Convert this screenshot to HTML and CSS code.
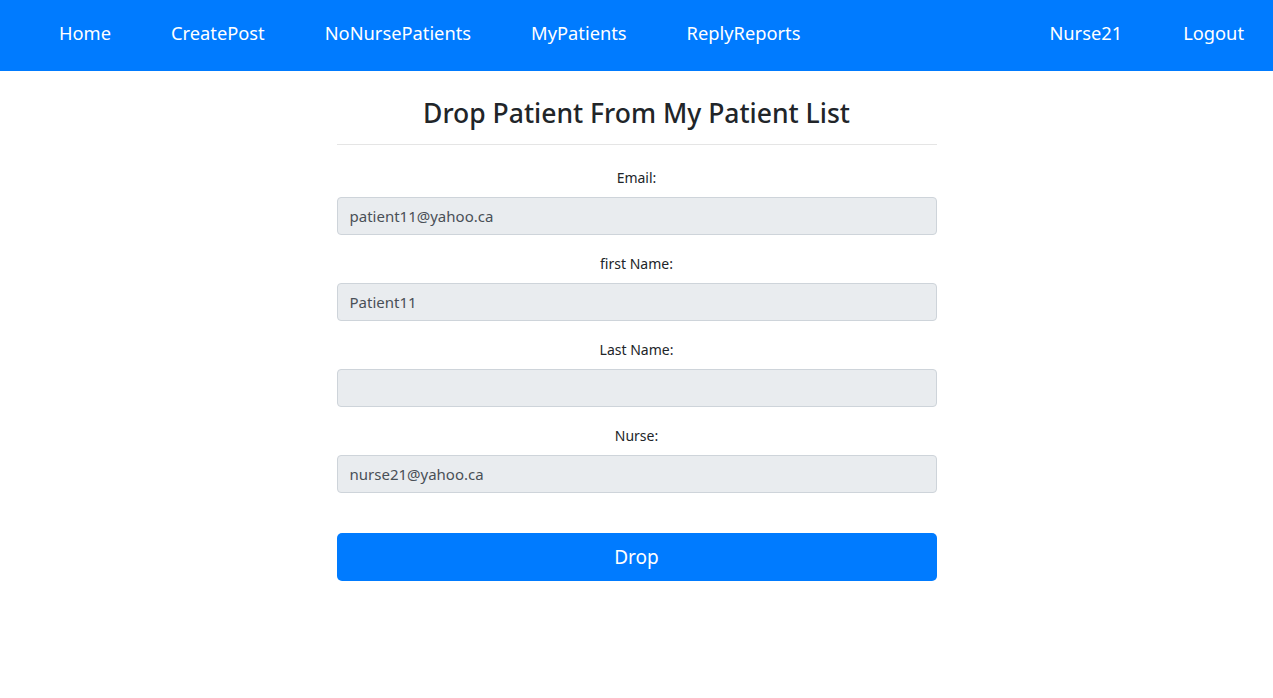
FILE: index.html
```html
<!DOCTYPE html>
<html lang="en">
<head>
<meta charset="utf-8">
<title>Drop Patient</title>
<link rel="stylesheet" href="styles.css">
</head>
<body>
<nav class="navbar">
  <div class="nav-left">
    <a class="nav-link" href="#">Home</a>
    <a class="nav-link" href="#">CreatePost</a>
    <a class="nav-link" href="#">NoNursePatients</a>
    <a class="nav-link" href="#">MyPatients</a>
    <a class="nav-link" href="#">ReplyReports</a>
  </div>
  <div class="nav-right">
    <a class="nav-link" href="#">Nurse21</a>
    <a class="nav-link" href="#">Logout</a>
  </div>
</nav>
<main class="container">
  <h2 class="title">Drop Patient From My Patient List</h2>
  <hr class="divider">
  <form class="form">
    <div class="form-group">
      <label class="label">Email:</label>
      <input class="input" type="text" value="patient11@yahoo.ca" readonly>
    </div>
    <div class="form-group">
      <label class="label">first Name:</label>
      <input class="input" type="text" value="Patient11" readonly>
    </div>
    <div class="form-group">
      <label class="label">Last Name:</label>
      <input class="input" type="text" value="" readonly>
    </div>
    <div class="form-group">
      <label class="label">Nurse:</label>
      <input class="input" type="text" value="nurse21@yahoo.ca" readonly>
    </div>
    <button class="btn" type="button">Drop</button>
  </form>
</main>
</body>
</html>
```
FILE: styles.css
```css
* { box-sizing: border-box; }
body {
  margin: 0;
  font-family: "Noto Sans", "Open Sans", sans-serif;
  color: #212529;
  background: #fff;
}
.navbar {
  height: 71px;
  background: #007bff;
  display: flex;
  align-items: center;
  padding: 0 29px 0 59px;
}
.nav-left, .nav-right {
  display: flex;
  align-items: center;
  gap: 60px;
}
.nav-right {
  margin-left: auto;
  gap: 61px;
}
.nav-link {
  color: #fff;
  text-decoration: none;
  font-size: 18.3px;
  line-height: 28px;
  margin-top: -6px;
}
.container {
  width: 600px;
  margin: 0 auto;
  padding-top: 24px;
}
.title {
  margin: 0;
  text-align: center;
  font-size: 26.5px;
  font-weight: 500;
  line-height: 36px;
  color: #212529;
}
.divider {
  margin: 13px 0 0;
  border: 0;
  border-top: 1px solid #e5e5e5;
}
.form {
  padding-top: 22px;
  display: flex;
  flex-direction: column;
}
.form-group {
  display: flex;
  flex-direction: column;
  margin-bottom: 18px;
}
.label {
  text-align: center;
  font-size: 14px;
  line-height: 22px;
  margin-bottom: 8px;
}
.input {
  height: 38px;
  width: 100%;
  background: #e9ecef;
  border: 1px solid #ced4da;
  border-radius: 4px;
  padding: 0 12px;
  font-family: inherit;
  font-size: 15px;
  color: #495057;
  outline: none;
}
.btn {
  margin-top: 22px;
  height: 48px;
  width: 100%;
  background: #007bff;
  color: #fff;
  border: 0;
  border-radius: 5px;
  font-family: inherit;
  font-size: 19px;
}
```
